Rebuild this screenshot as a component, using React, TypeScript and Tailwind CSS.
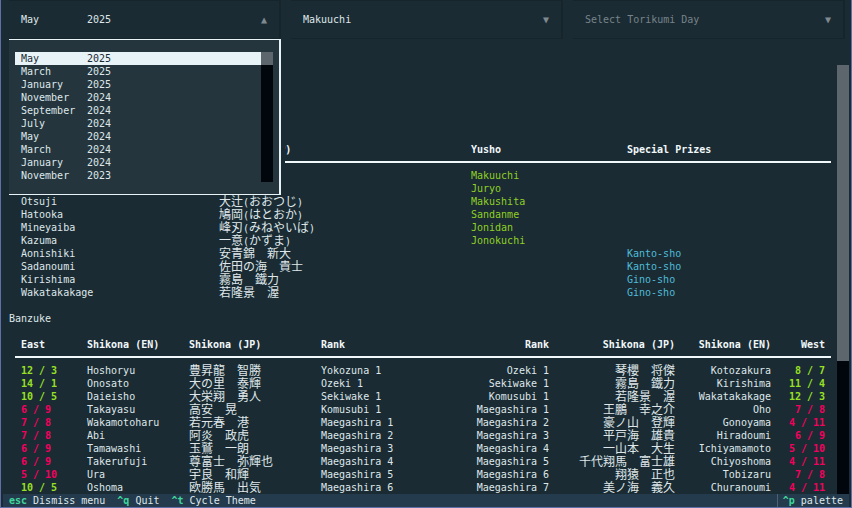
import { Fragment } from "react";

type Rikishi = { score: string; en: string; jp: string; rank: string };

const months: [string, string][] = [
  ["May", "2025"],
  ["March", "2025"],
  ["January", "2025"],
  ["November", "2024"],
  ["September", "2024"],
  ["July", "2024"],
  ["May", "2024"],
  ["March", "2024"],
  ["January", "2024"],
  ["November", "2023"],
];

const prizes: [string, string, string, string][] = [
  ["", "", "Makuuchi", ""],
  ["", "", "Juryo", ""],
  ["Otsuji", "大辻(おおつじ)", "Makushita", ""],
  ["Hatooka", "鳩岡(はとおか)", "Sandanme", ""],
  ["Mineyaiba", "峰刃(みねやいば)", "Jonidan", ""],
  ["Kazuma", "一意(かずま)", "Jonokuchi", ""],
  ["Aonishiki", "安青錦　新大", "", "Kanto-sho"],
  ["Sadanoumi", "佐田の海　貴士", "", "Kanto-sho"],
  ["Kirishima", "霧島　鐵力", "", "Gino-sho"],
  ["Wakatakakage", "若隆景　渥", "", "Gino-sho"],
];

const r = (score: string, en: string, jp: string, rank: string): Rikishi => ({ score, en, jp, rank });

const banzuke: [Rikishi, Rikishi][] = [
  [r("12 / 3", "Hoshoryu", "豊昇龍　智勝", "Yokozuna 1"), r("8 / 7", "Kotozakura", "琴櫻　将傑", "Ozeki 1")],
  [r("14 / 1", "Onosato", "大の里　泰輝", "Ozeki 1"), r("11 / 4", "Kirishima", "霧島　鐵力", "Sekiwake 1")],
  [r("10 / 5", "Daieisho", "大栄翔　勇人", "Sekiwake 1"), r("12 / 3", "Wakatakakage", "若隆景　渥", "Komusubi 1")],
  [r("6 / 9", "Takayasu", "高安　晃", "Komusubi 1"), r("7 / 8", "Oho", "王鵬　幸之介", "Maegashira 1")],
  [r("7 / 8", "Wakamotoharu", "若元春　港", "Maegashira 1"), r("4 / 11", "Gonoyama", "豪ノ山　登輝", "Maegashira 2")],
  [r("7 / 8", "Abi", "阿炎　政虎", "Maegashira 2"), r("6 / 9", "Hiradoumi", "平戸海　雄貴", "Maegashira 3")],
  [r("6 / 9", "Tamawashi", "玉鷲　一朗", "Maegashira 3"), r("5 / 10", "Ichiyamamoto", "一山本　大生", "Maegashira 4")],
  [r("6 / 9", "Takerufuji", "尊富士　弥輝也", "Maegashira 4"), r("4 / 11", "Chiyoshoma", "千代翔馬　富士雄", "Maegashira 5")],
  [r("5 / 10", "Ura", "宇良　和輝", "Maegashira 5"), r("7 / 8", "Tobizaru", "翔猿　正也", "Maegashira 6")],
  [r("10 / 5", "Oshoma", "欧勝馬　出気", "Maegashira 6"), r("4 / 11", "Churanoumi", "美ノ海　義久", "Maegashira 7")],
];

// Full-width glyphs take two terminal cells, parentheses take one.
function Kanji({ text }: { text: string }) {
  return (
    <div
      lang="ja"
      className="h-[13px] font-['Noto_Sans_CJK_JP',sans-serif] text-[12px] leading-[12px] whitespace-nowrap"
    >
      {text.split(/([()])/).map((part, i) =>
        part === "(" || part === ")" ? (
          <span key={i} className="font-['DejaVu_Sans_Mono',monospace] text-[10px] leading-none">
            {part}
          </span>
        ) : (
          <Fragment key={i}>{part}</Fragment>
        ),
      )}
    </div>
  );
}

function Score({ value }: { value: string }) {
  const wins = Number(value.split(" / ")[0]);
  return <span className={wins >= 8 ? "font-bold text-[#98e024]" : "font-bold text-[#f4005f]"}>{value}</span>;
}

function MonthSelect() {
  return (
    <div className="relative pr-1">
      <button
        type="button"
        aria-haspopup="listbox"
        aria-expanded="true"
        aria-controls="basho-list"
        className="flex h-[39px] w-full items-center border-y border-r-2 border-[#16242c] pr-3 pl-3 text-left"
      >
        <span className="w-[66px]">May</span>
        <span className="flex-1">2025</span>
        <span className="text-[#7f8a90]">▲</span>
      </button>
      <div className="absolute top-[39px] left-0 z-10 w-full bg-[#1b2b33] pr-1">
        <div className="flex h-[156px] border-y border-r-2 border-[#e8f3f8] bg-[#24353d] py-3 pr-1.5 pl-1.5">
          <ul id="basho-list" role="listbox" aria-label="Basho" className="flex-1">
            {months.map(([month, year], i) => (
              <li
                key={month + year}
                role="option"
                aria-selected={i === 0}
                className={i === 0 ? "flex bg-[#e8f3f8] pl-1.5 text-[#1b2b33]" : "flex pl-1.5"}
              >
                <span className="w-[66px]">{month}</span>
                <span>{year}</span>
              </li>
            ))}
          </ul>
          <div className="h-[130px] w-3 bg-[#00060c]">
            <div className="h-[13px] bg-[#5d656d]" />
          </div>
        </div>
      </div>
    </div>
  );
}

function Select({ label, value, muted }: { label: string; value: string; muted?: boolean }) {
  return (
    <div className="relative pr-1">
      <select
        aria-label={label}
        className={
          "block h-[39px] w-full appearance-none border-y border-r-2 border-[#16242c] bg-transparent pl-3 " +
          (muted ? "text-[#77838a]" : "text-[#dfe7ea]")
        }
      >
        <option>{value}</option>
      </select>
      <span className="pointer-events-none absolute top-[13px] right-[18px] text-[#7f8a90]">▼</span>
    </div>
  );
}

function Rule({ span }: { span: number }) {
  return (
    <tr aria-hidden="true">
      <td colSpan={span} className="p-0">
        <div className="h-[13px] pt-[5px]">
          <div className="h-0.5 bg-[#f1f8fb]" />
        </div>
      </td>
    </tr>
  );
}

export default function App() {
  return (
    <div className="flex h-screen flex-col overflow-hidden border-x border-b border-[#5f70a8] bg-[#1b2b33] font-['DejaVu_Sans_Mono','Noto_Sans_CJK_JP',monospace] text-[10px] leading-[13px] text-[#dfe7ea]">
      <header className="mx-0.5 mb-[26px] grid grid-cols-3 gap-1.5 pl-1.5">
        <MonthSelect />
        <Select label="Division" value="Makuuchi" />
        <Select label="Torikumi day" value="Select Torikumi Day" muted />
      </header>

      <main className="mx-0.5 flex min-h-0 flex-1 overflow-hidden">
        <div className="min-w-0 flex-1 overflow-hidden pt-[78px] pr-1.5 pl-1.5">
          <div className="pl-1.5">
            <table className="w-full table-fixed border-collapse text-left">
              <colgroup>
                <col className="w-[204px]" />
                <col className="w-[252px]" />
                <col className="w-[156px]" />
                <col />
              </colgroup>
              <thead>
                <tr className="h-[13px] text-[#f1f8fb]">
                  <td className="p-0 pl-1.5" />
                  <th className="p-0">Shikona (JP)</th>
                  <th className="p-0">Yusho</th>
                  <th className="p-0">Special Prizes</th>
                </tr>
              </thead>
              <tbody>
                <Rule span={4} />
                {prizes.map(([en, jp, yusho, prize], i) => (
                  <tr key={i} className="h-[13px]">
                    <td className="p-0 pl-1.5">{en}</td>
                    <td className="p-0">
                      <Kanji text={jp} />
                    </td>
                    <td className="p-0 text-[#8fd026]">{yusho}</td>
                    <td className="p-0 text-[#4fbcd8]">{prize}</td>
                  </tr>
                ))}
              </tbody>
            </table>
          </div>

          <h2 className="mt-[13px] mb-[13px]">Banzuke</h2>

          <div className="pl-1.5">
            <table className="w-full table-fixed border-collapse text-left">
              <colgroup>
                <col className="w-[72px]" />
                <col className="w-[102px]" />
                <col className="w-[132px]" />
                <col />
                <col className="w-[108px]" />
                <col className="w-[126px]" />
                <col className="w-[96px]" />
                <col className="w-[60px]" />
              </colgroup>
              <thead>
                <tr className="h-[13px] text-[#f1f8fb]">
                  <th className="p-0 pl-1.5">East</th>
                  <th className="p-0">Shikona (EN)</th>
                  <th className="p-0">Shikona (JP)</th>
                  <th className="p-0">Rank</th>
                  <th className="p-0 text-right">Rank</th>
                  <th className="p-0 text-right">Shikona (JP)</th>
                  <th className="p-0 text-right">Shikona (EN)</th>
                  <th className="p-0 pr-1.5 text-right">West</th>
                </tr>
              </thead>
              <tbody>
                <Rule span={8} />
                {banzuke.map(([east, west]) => (
                  <tr key={east.en} className="h-[13px]">
                    <td className="p-0 pl-1.5">
                      <Score value={east.score} />
                    </td>
                    <td className="p-0">{east.en}</td>
                    <td className="p-0">
                      <Kanji text={east.jp} />
                    </td>
                    <td className="p-0">{east.rank}</td>
                    <td className="p-0 text-right">{west.rank}</td>
                    <td className="p-0 text-right">
                      <Kanji text={west.jp} />
                    </td>
                    <td className="p-0 text-right">{west.en}</td>
                    <td className="p-0 pr-1.5 text-right">
                      <Score value={west.score} />
                    </td>
                  </tr>
                ))}
              </tbody>
            </table>
          </div>
        </div>
        <div className="w-3 bg-[#00060c]">
          <div className="h-[69%] bg-[#5d656d]" />
        </div>
      </main>

      <footer className="mx-0.5 flex h-[13px] bg-[#243b4d] pr-1.5 pl-1.5">
        <button type="button" className="mr-3">
          <b className="text-[#3fd69b]">esc</b> Dismiss menu
        </button>
        <button type="button" className="mr-3">
          <b className="text-[#3fd69b]">^q</b> Quit
        </button>
        <button type="button">
          <b className="text-[#3fd69b]">^t</b> Cycle Theme
        </button>
        <button type="button" className="ml-auto border-l border-[#4d6170] pl-[5px]">
          <b className="text-[#3fd69b]">^p</b> palette
        </button>
      </footer>
    </div>
  );
}
